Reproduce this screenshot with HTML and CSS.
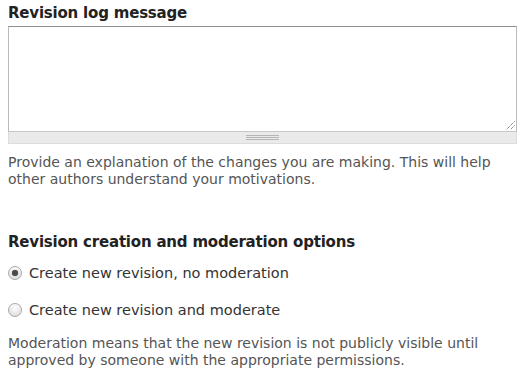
FILE: index.html
```html
<!DOCTYPE html>
<html>
<head>
<meta charset="utf-8">
<link rel="stylesheet" href="styles.css">
</head>
<body>
<div class="form">
  <div class="field">
    <label class="field-label" for="log">Revision log message</label>
    <div class="textarea-wrap">
      <div class="textarea-box">
        <textarea id="log" class="textarea"></textarea>
        <svg class="resize-corner" width="9" height="9" viewBox="0 0 9 9">
          <path d="M8.5 0.5 L0.5 8.5 M8.5 4.5 L4.5 8.5" stroke="#555" stroke-width="1" stroke-dasharray="1 1" fill="none"/>
        </svg>
      </div>
      <div class="grippie"><span class="grip-lines"></span></div>
    </div>
    <p class="description">Provide an explanation of the changes you are making. This will help other authors understand your motivations.</p>
  </div>

  <div class="field options">
    <div class="field-label small">Revision creation and moderation options</div>
    <label class="radio-row first">
      <span class="radio checked"></span>
      <span class="radio-text">Create new revision, no moderation</span>
    </label>
    <label class="radio-row">
      <span class="radio"></span>
      <span class="radio-text">Create new revision and moderate</span>
    </label>
    <p class="description desc2">Moderation means that the new revision is not publicly visible until approved by someone with the appropriate permissions.</p>
  </div>
</div>
</body>
</html>
```

FILE: styles.css
```css
html, body {
  margin: 0;
  padding: 0;
  background: #fff;
}
body {
  padding: 3px 8px 0 8px;
  font-family: "DejaVu Sans", "Liberation Sans", sans-serif;
  color: #333;
}
.form {
  display: flex;
  flex-direction: column;
}
.field {
  display: flex;
  flex-direction: column;
}
.field-label {
  display: block;
  font-size: 15px;
  letter-spacing: -0.2px;
  font-weight: bold;
  line-height: 20px;
  color: #222;
  margin-bottom: 3px;
}
.field-label.small {
  margin-bottom: 0;
}
.textarea-wrap {
  width: 509px;
  display: flex;
  flex-direction: column;
}
.textarea-box {
  position: relative;
  height: 106px;
}
.textarea {
  display: block;
  box-sizing: border-box;
  width: 100%;
  height: 106px;
  margin: 0;
  border: 1px solid #bbb;
  border-top-color: #8f8f8f;
  border-bottom-color: #c8c8c8;
  resize: none;
  background: #fff;
  outline: none;
}
.resize-corner {
  position: absolute;
  right: 2px;
  bottom: 2px;
}
.grippie {
  box-sizing: border-box;
  height: 12px;
  background: #eaeaea;
  border: 1px solid #dcdcdc;
  border-top: none;
  display: flex;
  justify-content: center;
  align-items: center;
}
.grip-lines {
  width: 33px;
  height: 5px;
  background: linear-gradient(#b5b5b5 0 1px, #eaeaea 1px 2px, #b5b5b5 2px 3px, #eaeaea 3px 4px, #b5b5b5 4px 5px);
}
.description {
  margin: 10px 0 0 0;
  font-size: 14px;
  line-height: 17px;
  color: #555;
  width: 505px;
}
.options {
  margin-top: 44px;
}
.radio-row {
  display: flex;
  align-items: center;
  gap: 7px;
  font-size: 14.5px;
  line-height: 18px;
  color: #333;
  margin-top: 19px;
}
.radio-row.first {
  margin-top: 12px;
}
.radio {
  box-sizing: border-box;
  width: 14px;
  height: 14px;
  border-radius: 50%;
  border: 1px solid #a8a8a8;
  background: radial-gradient(circle at 50% 35%, #fdfdfd 0%, #e6e6e6 60%, #d2d2d2 100%);
  box-shadow: inset 0 1px 1px rgba(255,255,255,0.8);
  display: flex;
  align-items: center;
  justify-content: center;
}
.radio.checked::after {
  content: "";
  width: 6px;
  height: 6px;
  border-radius: 50%;
  background: #4a4a4a;
  box-shadow: 0 0 1px #777;
}
.desc2 {
  margin-top: 16px;
}
```
